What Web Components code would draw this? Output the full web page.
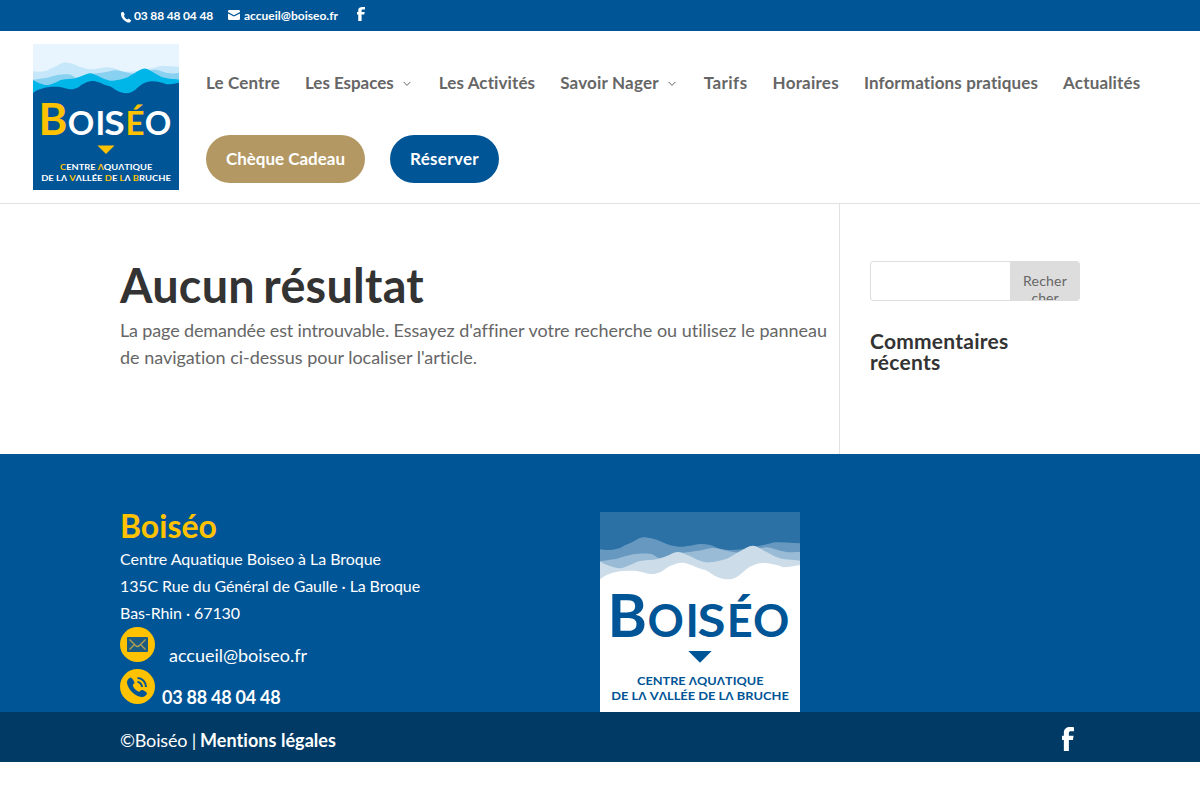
<!DOCTYPE html>
<html lang="fr">
<head>
<meta charset="utf-8">
<title>Page non trouvée | Boiséo</title>
<style>
body{margin:0;background:#fff;color:#666;font:400 18px/27px Lato,"Open Sans",sans-serif;font-variant-ligatures:none}
</style>
</head>
<body>
<boiseo-page></boiseo-page>
<script>
const define = (name, html) => {
  const tpl = document.createElement('template');
  tpl.innerHTML = html;
  customElements.define(name, class extends HTMLElement {
    constructor() {
      super();
      this.attachShadow({ mode: 'open' }).append(tpl.content.cloneNode(true));
    }
  });
};

/* One line of text, tracked so that it advances by exactly `w` pixels */
customElements.define('fit-text', class extends HTMLElement {
  constructor() {
    super();
    this.attachShadow({ mode: 'open' }).innerHTML =
      '<style>:host{display:inline-block;white-space:pre}</style><slot></slot>';
  }
  fit() {
    const w = +this.getAttribute('w');
    const natural = this.getBoundingClientRect().width;
    this.style.letterSpacing = (w - natural) / this.textContent.length + 'px';
  }
});

/* Smooth filled silhouette through a list of crest points */
const wave = pts => {
  let d = `M${pts[0]}`;
  for (let i = 0; i < pts.length - 1; i++) {
    const a = pts[i - 1] || pts[i], b = pts[i], c = pts[i + 1], e = pts[i + 2] || c;
    d += `C${b[0] + (c[0] - a[0]) / 6} ${b[1] + (c[1] - a[1]) / 6} ${c[0] - (e[0] - b[0]) / 6} ${c[1] - (e[1] - b[1]) / 6} ${c[0]} ${c[1]}`;
  }
  return d;
};
const W1 = wave([[0,37.3],[10,38],[20,36],[25,33.3],[33,29.7],[42.7,25.3],[55,27.3],[66.7,32],[78.3,34.7],[90,33.7],[100,32],[110,33],[120,36.7],[133,38],[147,36.3],[166.7,32.3],[176.7,30.3],[200,31.3]]);
const W2 = wave([[0,49],[16.7,46.7],[33,42.3],[50,41.7],[60,46],[73,42],[83,40.7],[100,38.4],[113,36],[127,38.7],[140,40.7],[153,38],[167,35.3],[180,38.7],[190,40.3],[200,39.7]]);
const W3 = wave([[0,49.7],[10,54],[20,56.3],[30,53],[40,49],[56.7,47.3],[66.7,44],[77.3,40],[86.7,42.7],[100,48.7],[110,50.3],[126.7,46.7],[140,39.3],[153,33.7],[166.7,40],[180,46.3],[200,48.7]]);
const BASE = wave([[0,67.3],[6.7,63],[20,59.3],[36.7,59],[50,62],[60,60.3],[70,54],[83,50.7],[100,56.5],[106.7,58.7],[116.7,64.7],[126.7,67.3],[136.7,65],[150,54.7],[163,51],[176.7,53],[185,55.2],[200,53]]);

const F_PATH = 'M6.300 24V13H10l.6-4.300H6.300V6c0-1.300.5-1.800 2-1.800H11V.2C10.500.1 9 0 7.600 0 4 0 1.700 2 1.700 5.500V8.700H0V13h1.700v11z';

define('fb-icon', `<style>:host{display:block}svg{display:block;width:100%;height:100%}</style>
<svg viewBox="0 0 11 24" preserveAspectRatio="none"><path fill="#fff" d="${F_PATH}"/></svg>`);

/* Colours come in as custom properties so both logo versions share one drawing */
define('boiseo-logo', `<style>
:host{display:block}
svg{display:block;width:100%;height:100%}
.sky{fill:var(--sky)}.w1{fill:var(--w1)}.w2{fill:var(--w2)}.w3{fill:var(--w3)}.base{fill:var(--base)}
text{font-family:Lato,sans-serif;font-weight:700;fill:var(--ink)}
.a{fill:var(--accent)}
.small{font-size:11.500px}
.l{font-family:"Noto Sans",sans-serif;font-size:11.500px;font-weight:600}
.cap{font-size:45px}
</style>
<svg viewBox="0 0 200 200">
<rect class="sky" width="200" height="200"/>
<path class="w1" d="${W1}V90H0z"/>
<path class="w2" d="${W2}V90H0z"/>
<path class="w3" d="${W3}V90H0z"/>
<path class="base" d="${BASE}V200H0z"/>
<text class="a" x="7.500" y="125" font-size="60">B</text>
<text class="cap" x="47.500" y="125">O</text>
<text class="cap" x="85.500" y="125">I</text>
<text class="cap" x="97.500" y="125" textLength="28" lengthAdjust="spacingAndGlyphs">S</text>
<text class="cap a" x="126.700" y="125" textLength="26" lengthAdjust="spacingAndGlyphs">É</text>
<text class="cap" x="153" y="125">O</text>
<path d="M88.300 139H111.700L100 150.800z" style="fill:var(--accent)"/>
<text class="small" x="37" y="173" textLength="126.500" lengthAdjust="spacingAndGlyphs"><tspan class="a">C</tspan>ENTRE <tspan class="a l">Λ</tspan>QU<tspan class="l">Λ</tspan>TIQUE</text>
<text class="small" x="11.300" y="188" textLength="177.500" lengthAdjust="spacingAndGlyphs">DE L<tspan class="l">Λ</tspan> <tspan class="a">V</tspan><tspan class="l">Λ</tspan>LLÉE <tspan class="a">D</tspan>E <tspan class="a">L</tspan><tspan class="l">Λ</tspan> <tspan class="a">B</tspan>RUCHE</text>
</svg>`);

define('top-bar', `<style>
:host{display:flex;align-items:flex-start;height:31px;box-sizing:border-box;padding:9px 120px 0;background:#005596;color:#fff;font-size:12px;font-weight:700;line-height:13px}
span{display:flex}
.ph{margin-right:15px}.ph svg{width:12px;height:12px;margin:2px 2px 0 0}
.ml svg{width:12px;height:10px;margin:1px 4px 0 0}
fb-icon{width:8px;height:14px;margin:-2px 0 0 18.500px}
</style>
<span class="ph"><svg viewBox="0 0 12 12"><path fill="#fff" d="M3.300.7 1.200 1.500C-.2 5.500 5 12 9.800 11.500L11.300 9.600 8.600 7.600 7.300 8.600C6 8 4.400 6.300 4 4.700L4.800 3.500z"/></svg><fit-text w="79">03 88 48 04 48</fit-text></span>
<span class="ml"><svg viewBox="0 0 12 10"><path fill="#fff" d="M0 1.200Q0 0 1.200 0H10.800Q12 0 12 1.200V2L6 5.200 0 2zM0 3.400 6 6.500 12 3.400V8.800Q12 10 10.800 10H1.200Q0 10 0 8.800z"/></svg><fit-text w="94">accueil@boiseo.fr</fit-text></span>
<fb-icon></fb-icon>`);

define('nav-item', `<style>
:host{display:flex;align-items:center;height:24px;font-size:17px;font-weight:700;line-height:24px;white-space:nowrap}
svg{display:none;width:8px;height:6px;margin:2px 3px 0 9px}
:host([sub]) svg{display:block}
:host([pill]){height:48px;box-sizing:border-box;padding:0 20px;border-radius:24px;color:#fff;background:var(--pill)}
</style><slot></slot><svg viewBox="0 0 8 6"><path d="M.6.9 4 4.400 7.400.9" fill="none" stroke="#666" stroke-width="1"/></svg>`);

define('main-header', `<style>
:host{display:flex;height:173px;box-sizing:border-box;border-bottom:1px solid #e2e2e2;padding:13px 33px 0;background:#fff}
boiseo-logo{flex:none;width:146px;height:146px;--sky:#e8f5fe;--w1:#c5e7f9;--w2:#89d1f0;--w3:#00b5e8;--base:#005596;--ink:#fff;--accent:#ffc200}
nav{display:flex;flex-wrap:wrap;align-content:flex-start;gap:40px 25px;padding:27px 0 0 27px}
.row{display:flex;gap:25px}
</style>
<boiseo-logo></boiseo-logo>
<nav><div class="row"><nav-item><fit-text w="74">Le Centre</fit-text></nav-item><nav-item sub><fit-text w="88.700">Les Espaces</fit-text></nav-item><nav-item><fit-text w="96.500">Les Activités</fit-text></nav-item><nav-item sub><fit-text w="98.500">Savoir Nager</fit-text></nav-item><nav-item><fit-text w="43.900">Tarifs</fit-text></nav-item><nav-item><fit-text w="66.300">Horaires</fit-text></nav-item><nav-item><fit-text w="174.200">Informations pratiques</fit-text></nav-item><nav-item><fit-text w="77.300">Actualités</fit-text></nav-item></div>
<div class="row"><nav-item pill style="--pill:#b39863"><fit-text w="119">Chèque Cadeau</fit-text></nav-item><nav-item pill style="--pill:#005596"><fit-text w="69">Réserver</fit-text></nav-item></div></nav>`);

define('search-box', `<style>
:host{display:flex;width:210px;height:40px;box-sizing:border-box;border:1px solid #ddd;border-radius:3px;overflow:hidden;background:#fff}
.field{flex:1}
.btn{width:69px;box-sizing:border-box;padding:10px 12px 0 13px;background:#ddd;font-size:14px;line-height:17px;text-align:center;height:60px}
</style><div class="field"></div><div class="btn"><fit-text w="44">Recher</fit-text><br>cher</div>`);

define('main-content', `<style>
:host{display:flex;height:250px;padding:0 120px}
.left{width:719px;border-right:1px solid #e2e2e2;padding-top:57px;box-sizing:content-box}
h1{margin:0 0 8px;font-size:46.800px;line-height:48px;color:#333;font-weight:700;word-spacing:-.07em}
p{margin:0;white-space:nowrap}
aside{padding:57px 0 0 30px}
h4{margin:29px 0 0;font-size:21px;line-height:21px;color:#333;width:160px}
</style>
<div class="left"><h1><fit-text w="304">Aucun résultat</fit-text></h1><p><fit-text w="273.500">La page demandée est introuvable. </fit-text><fit-text w="433.500">Essayez d'affiner votre recherche ou utilisez le panneau</fit-text><br><fit-text w="357">de navigation ci-dessus pour localiser l'article.</fit-text></p></div>
<aside><search-box></search-box><h4><fit-text w="138.500">Commentaires</fit-text><br><fit-text w="70.500">récents</fit-text></h4></aside>`);

define('contact-line', `<style>
:host{display:flex;height:42px;align-items:flex-start}
.ic{width:35px;height:35px}
.t{margin:15px 0 0 7px;line-height:27px}
::slotted(svg){display:block;width:35px;height:35px}
</style><div class="ic"><slot name="icon"></slot></div><div class="t"><slot></slot></div>`);

define('site-footer', `<style>
:host{display:block;background:#005596;color:#fff}
.cols{display:flex;height:258px;box-sizing:border-box;padding:58px 120px 0}
.info{width:480px}
h2{margin:-1px 0 0;height:34px;font-size:32px;line-height:29px;color:#ffc200}
.adr{font-size:16px;line-height:27px;height:82px}
.mail{margin-left:7px}
boiseo-logo{width:200px;height:200px;--sky:#2b71a5;--w1:#6799c0;--w2:#99bbd5;--w3:#ccdde9;--base:#fff;--ink:#005596;--accent:#005596}
.bottom{display:flex;justify-content:space-between;height:50px;box-sizing:border-box;padding:15px 126px 0 120px;background:#003a65}
.copy{display:flex;gap:4px}
fb-icon{width:12px;height:24px}
</style>
<div class="cols"><div class="info"><h2><fit-text w="97">Boiséo</fit-text></h2>
<div class="adr"><fit-text w="261">Centre Aquatique Boiseo à La Broque</fit-text><br><fit-text w="300">135C Rue du Général de Gaulle · La Broque</fit-text><br><fit-text w="120">Bas-Rhin · 67130</fit-text></div>
<contact-line><svg slot="icon" viewBox="0 0 35 35"><circle cx="17.500" cy="17.500" r="17.500" fill="#ffc200"/><rect x="7" y="10" width="21" height="15" rx="1" fill="#1c5c83"/><path d="M9.500 12.500 15.500 18.500Q17.500 20.500 19.500 18.500L25.500 12.500M9.500 22.500 14 18M25.500 22.500 21 18" fill="none" stroke="#b8a04c" stroke-width="1.300"/></svg><fit-text class="mail" w="138">accueil@boiseo.fr</fit-text></contact-line>
<contact-line><svg slot="icon" viewBox="0 0 35 35"><circle cx="17.500" cy="17.500" r="17.500" fill="#ffc200"/><path fill="#005596" d="M10.500 8.500C8 9.500 6.800 11.500 7 14 8 20.500 15 27.500 21.500 28 24 28.200 26.500 26.500 27 24.500 27 23 23 20.800 21.500 21 20.500 21.200 19.800 23 18.800 22.700 16.500 22 13.500 19 12.800 16.500 12.500 15.500 14.500 14.800 14.500 13.800 14.500 12.500 12 8.500 10.500 8.500z"/><path d="M17.500 9C22 9 26 13 26 18M17.500 13C20 13 22 15.500 22 18" fill="none" stroke="#005596" stroke-width="2"/></svg><b><fit-text w="118.500">03 88 48 04 48</fit-text></b></contact-line>
</div><boiseo-logo></boiseo-logo></div>
<div class="bottom"><div class="copy"><fit-text w="76">©Boiséo |</fit-text><b><fit-text w="136">Mentions légales</fit-text></b></div><fb-icon></fb-icon></div>`);

define('boiseo-page', `<style>:host{display:block}</style><top-bar></top-bar><main-header></main-header><main-content></main-content><site-footer></site-footer>`);

const fitAll = root => root.querySelectorAll('*').forEach(el => {
  if (el.localName === 'fit-text') el.fit();
  else if (el.shadowRoot) fitAll(el.shadowRoot);
});
fitAll(document);
</script>
</body>
</html>
